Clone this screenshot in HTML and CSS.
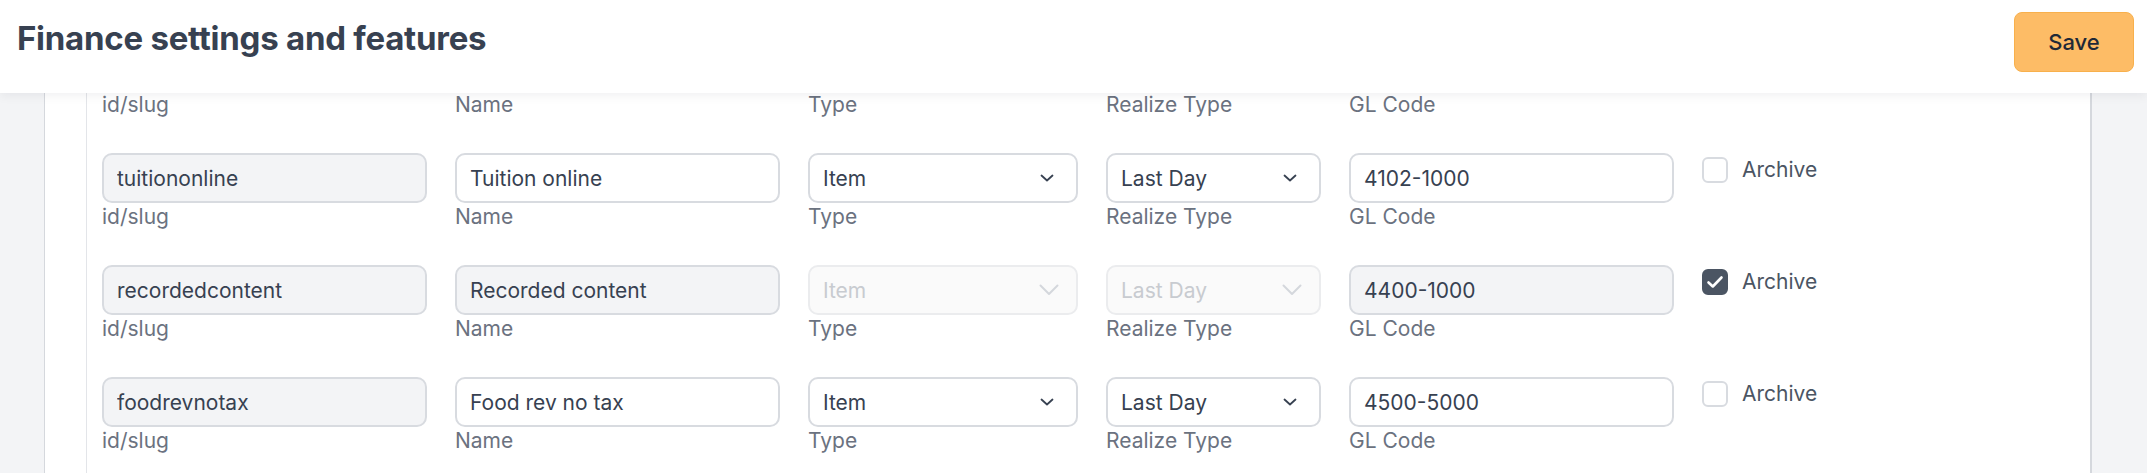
FILE: index.html
```html
<!DOCTYPE html>
<html lang="en">
<head>
<meta charset="utf-8">
<title>Finance settings and features</title>
<link rel="stylesheet" href="styles.css">
</head>
<body>
<header class="topbar">
  <h1 class="title">Finance settings and features</h1>
  <button class="save" type="button">Save</button>
</header>
<main class="page">
  <section class="card">
    <div class="list">
      <div class="row row-labels">
        <div class="field w-slug"><span class="label">id/slug</span></div>
        <div class="field w-name"><span class="label">Name</span></div>
        <div class="field w-type"><span class="label">Type</span></div>
        <div class="field w-real"><span class="label">Realize Type</span></div>
        <div class="field w-gl"><span class="label">GL Code</span></div>
      </div>

      <div class="row">
        <div class="field w-slug"><input class="input input-locked" value="tuitiononline" readonly><span class="label">id/slug</span></div>
        <div class="field w-name"><input class="input" value="Tuition online" readonly><span class="label">Name</span></div>
        <div class="field w-type"><div class="select"><span>Item</span><svg class="chev" width="14" height="8" viewBox="0 0 14 8"><path d="M1.5 1.5 L7 6.5 L12.5 1.5" fill="none" stroke="#374151" stroke-width="1.8" stroke-linecap="round" stroke-linejoin="round"/></svg></div><span class="label">Type</span></div>
        <div class="field w-real"><div class="select"><span>Last Day</span><svg class="chev" width="14" height="8" viewBox="0 0 14 8"><path d="M1.5 1.5 L7 6.5 L12.5 1.5" fill="none" stroke="#374151" stroke-width="1.8" stroke-linecap="round" stroke-linejoin="round"/></svg></div><span class="label">Realize Type</span></div>
        <div class="field w-gl"><input class="input" value="4102-1000" readonly><span class="label">GL Code</span></div>
        <label class="archive"><span class="box"></span><span class="archive-text">Archive</span></label>
      </div>

      <div class="row">
        <div class="field w-slug"><input class="input input-locked" value="recordedcontent" readonly><span class="label">id/slug</span></div>
        <div class="field w-name"><input class="input input-locked" value="Recorded content" readonly><span class="label">Name</span></div>
        <div class="field w-type"><div class="select select-disabled"><span>Item</span><svg class="chev-lg" width="20" height="12" viewBox="0 0 20 12"><path d="M1.5 1.5 L10 10 L18.5 1.5" fill="none" stroke="#d4d7dc" stroke-width="2" stroke-linecap="round" stroke-linejoin="round"/></svg></div><span class="label">Type</span></div>
        <div class="field w-real"><div class="select select-disabled"><span>Last Day</span><svg class="chev-lg" width="20" height="12" viewBox="0 0 20 12"><path d="M1.5 1.5 L10 10 L18.5 1.5" fill="none" stroke="#d4d7dc" stroke-width="2" stroke-linecap="round" stroke-linejoin="round"/></svg></div><span class="label">Realize Type</span></div>
        <div class="field w-gl"><input class="input input-locked" value="4400-1000" readonly><span class="label">GL Code</span></div>
        <label class="archive"><span class="box box-checked"><svg width="18" height="14" viewBox="0 0 18 14"><path d="M2.5 7.5 L6.8 11.5 L15.5 2.5" fill="none" stroke="#ffffff" stroke-width="2.6" stroke-linecap="round" stroke-linejoin="round"/></svg></span><span class="archive-text">Archive</span></label>
      </div>

      <div class="row">
        <div class="field w-slug"><input class="input input-locked" value="foodrevnotax" readonly><span class="label">id/slug</span></div>
        <div class="field w-name"><input class="input" value="Food rev no tax" readonly><span class="label">Name</span></div>
        <div class="field w-type"><div class="select"><span>Item</span><svg class="chev" width="14" height="8" viewBox="0 0 14 8"><path d="M1.5 1.5 L7 6.5 L12.5 1.5" fill="none" stroke="#374151" stroke-width="1.8" stroke-linecap="round" stroke-linejoin="round"/></svg></div><span class="label">Type</span></div>
        <div class="field w-real"><div class="select"><span>Last Day</span><svg class="chev" width="14" height="8" viewBox="0 0 14 8"><path d="M1.5 1.5 L7 6.5 L12.5 1.5" fill="none" stroke="#374151" stroke-width="1.8" stroke-linecap="round" stroke-linejoin="round"/></svg></div><span class="label">Realize Type</span></div>
        <div class="field w-gl"><input class="input" value="4500-5000" readonly><span class="label">GL Code</span></div>
        <label class="archive"><span class="box"></span><span class="archive-text">Archive</span></label>
      </div>
    </div>
  </section>
</main>
</body>
</html>
```
FILE: styles.css
```css
* { box-sizing: border-box; }

html, body {
  margin: 0;
  padding: 0;
}

body {
  width: 2147px;
  height: 473px;
  overflow: hidden;
  background: #f3f4f6;
  font-family: Inter, "Noto Sans", "Liberation Sans", sans-serif;
  color: #374151;
}

.topbar {
  position: relative;
  z-index: 2;
  height: 93px;
  background: #ffffff;
  box-shadow: 0 3px 10px rgba(17, 24, 39, 0.06);
  display: flex;
  justify-content: space-between;
  align-items: flex-start;
  padding: 0 13px 0 17px;
}

.title {
  margin: 18px 0 0 0;
  font-size: 33px;
  line-height: 40px;
  font-weight: 700;
  color: #374151;
  letter-spacing: -0.25px;
}

.save {
  margin-top: 12px;
  width: 120px;
  height: 60px;
  background: #fdbc66;
  border: 1.5px solid #f8b04c;
  border-radius: 8px;
  font-family: Inter, "Noto Sans", "Liberation Sans", sans-serif;
  font-size: 22px;
  font-weight: 500;
  color: #1f2937;
  padding: 0;
}

.page {
  height: 380px;
  padding: 0 55px 0 44px;
}

.card {
  height: 380px;
  overflow: hidden;
  background: #ffffff;
  border-left: 1px solid #d5d8dd;
  border-right: 2px solid #d5d8dd;
  padding-left: 41px;
}

.list {
  height: 380px;
  border-left: 1px solid #e3e5e9;
  padding-left: 15px;
  display: flex;
  flex-direction: column;
  gap: 34px;
}

.row {
  display: flex;
  gap: 28px;
  align-items: flex-start;
  flex-shrink: 0;
}

.row-labels {
  margin-bottom: 2px;
}

.row-labels .label {
  line-height: 24px;
}

.field {
  display: flex;
  flex-direction: column;
}

.w-slug { width: 325px; }
.w-name { width: 325px; }
.w-type { width: 270px; }
.w-real { width: 215px; }
.w-gl { width: 325px; }

.label {
  font-size: 21px;
  line-height: 28px;
  color: #6b7280;
}

.input {
  display: block;
  width: 100%;
  height: 50px;
  margin: 0;
  border: 2px solid #d8dbe0;
  border-radius: 10px;
  background: #ffffff;
  padding: 0 13px;
  font-family: Inter, "Noto Sans", "Liberation Sans", sans-serif;
  font-size: 21px;
  color: #374151;
  outline: none;
}

.input-locked {
  background: #f3f4f6;
}

.select {
  height: 50px;
  border: 2px solid #d8dbe0;
  border-radius: 10px;
  background: #ffffff;
  padding: 0 22px 0 13px;
  display: flex;
  align-items: center;
  justify-content: space-between;
  font-size: 21px;
  color: #374151;
}

.select-disabled {
  background: #fafafa;
  border-color: #ebecee;
  color: #c8cbd0;
  padding-right: 17px;
}

.chev, .chev-lg { display: block; }

.archive {
  display: flex;
  align-items: center;
  gap: 14px;
  margin-top: 3px;
  height: 28px;
}

.box {
  width: 26px;
  height: 26px;
  border: 2px solid #d8dbe0;
  border-radius: 6px;
  background: #ffffff;
  display: flex;
  align-items: center;
  justify-content: center;
}

.box-checked {
  background: #4b5563;
  border-color: #4b5563;
}

.archive-text {
  font-size: 21px;
  line-height: 28px;
  color: #4b5563;
}
```
